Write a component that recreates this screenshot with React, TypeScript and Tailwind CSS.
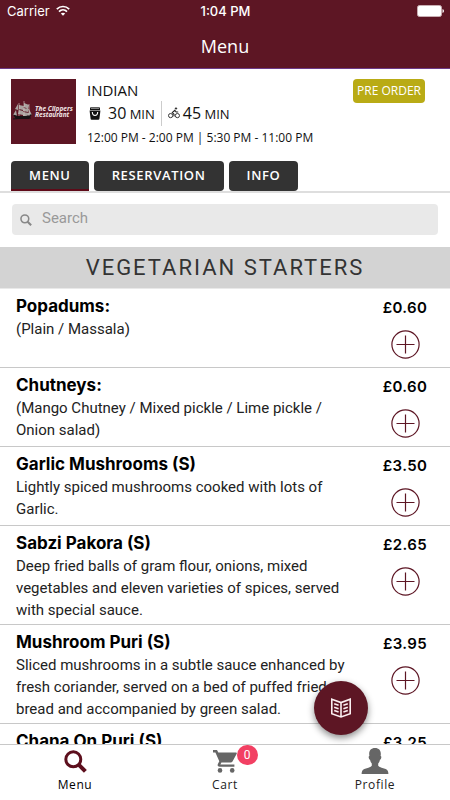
import { useState } from "react"

type MenuItem = {
  name: string
  description?: string
  price: number
}

const items: MenuItem[] = [
  { name: "Popadums:", description: "(Plain / Massala)", price: 0.6 },
  {
    name: "Chutneys:",
    description: "(Mango Chutney / Mixed pickle / Lime pickle / Onion salad)",
    price: 0.6,
  },
  {
    name: "Garlic Mushrooms (S)",
    description: "Lightly spiced mushrooms cooked with lots of Garlic.",
    price: 3.5,
  },
  {
    name: "Sabzi Pakora (S)",
    description:
      "Deep fried balls of gram flour, onions, mixed vegetables and eleven varieties of spices, served with special sauce.",
    price: 2.65,
  },
  {
    name: "Mushroom Puri (S)",
    description:
      "Sliced mushrooms in a subtle sauce enhanced by fresh coriander, served on a bed of puffed fried bread and accompanied by green salad.",
    price: 3.95,
  },
  { name: "Chana On Puri (S)", price: 3.25 },
]

const tabs = ["MENU", "RESERVATION", "INFO"]

const formatPrice = (price: number) => `£${price.toFixed(2)}`

const WifiIcon = () => (
  <svg width="14" height="12" viewBox="0 0 14 12" fill="none" stroke="white" strokeWidth="1.7" aria-hidden="true">
    <path d="M0.8 4.2C4.4 0.6 9.6 0.6 13.2 4.2" />
    <path d="M3 6.6C5.3 4.3 8.7 4.3 11 6.6" />
    <path d="M4.8 8.6C6.2 7.4 7.8 7.4 9.2 8.6L7 10.8Z" fill="white" stroke="none" />
  </svg>
)

const BatteryIcon = () => (
  <svg width="27" height="12" viewBox="0 0 27 12" aria-hidden="true">
    <rect x="0.5" y="0.5" width="24" height="11" rx="2" fill="white" stroke="#c9aeb3" />
    <path d="M25.5 4v4q1.5-.6 1.5-2t-1.5-2z" fill="white" />
  </svg>
)

const Logo = () => (
  <div className="flex size-[65px] shrink-0 items-center bg-[#5d1624]">
    <svg width="65" height="65" viewBox="0 0 65 65" role="img" aria-label="The Clippers Restaurant">
      <g fill="#aaa3a0">
        <path d="M7 25l-3 5 3 1zM8 26l5 1-1 4-4-1zM8 31l4 1v4l-5-1z" />
        <path d="M13 24l5 2-1 4-4-2zM12 29l6 1-1 3-5-1zM12 33l6 1v3h-6z" />
        <path d="M5 31l-3 5 4 1zM18 30l3 6h-3z" />
      </g>
      <path d="M2 35.5l5 1.5h8l6-2-3 5H5z" fill="#181315" />
      <path d="M8 24v13M13 22v15M18 25v12" stroke="#d8cdca" strokeWidth="0.6" />
      <path d="M2 40q9-1 18-1" stroke="#181315" fill="none" />
      <g fill="#f1e6e7" fontFamily="Noto Sans, sans-serif" fontSize="6.5" fontWeight="700" fontStyle="italic">
        <text x="24" y="32">The Clippers</text>
        <text x="24" y="38">Restaurant</text>
      </g>
    </svg>
  </div>
)

const BagIcon = () => (
  <svg width="12" height="13" viewBox="0 0 12 13" aria-hidden="true">
    <path d="M1 1.4Q1 .3 2 .3h8q1 0 1 1.1V3H1z" fill="#111" />
    <path d="M2 1.3h8" stroke="white" strokeWidth="0.6" />
    <path d="M.6 3.6h10.8L10.4 12q-.1.8-1 .8H2.6q-.9 0-1-.8z" fill="#111" />
    <path d="M3.3 5q.2 3.4 2.7 3.4T8.7 5" fill="none" stroke="white" strokeWidth="1.1" />
  </svg>
)

const BikeIcon = () => (
  <svg width="12" height="12" viewBox="0 0 12 12" fill="none" stroke="#222" strokeWidth="0.9" aria-hidden="true">
    <circle cx="2.6" cy="8.6" r="2.1" />
    <circle cx="9.4" cy="8.6" r="2.1" />
    <circle cx="8" cy="1.5" r="0.7" fill="#222" />
    <path d="M6 9.5V7.3L4.3 5.6 6.8 3.3 8.2 5h2" strokeWidth="1.1" />
  </svg>
)

const SearchIcon = ({ className }: { className: string }) => (
  <svg className={className} viewBox="0 0 24 24" fill="none" stroke="currentColor" aria-hidden="true">
    <circle cx="9.7" cy="9.7" r="7.8" strokeWidth="3.1" />
    <path d="M15.3 15.3l7 7" strokeWidth="4.2" />
  </svg>
)

const CartIcon = () => (
  <svg width="26" height="24" viewBox="0 0 26 24" fill="#666" aria-hidden="true">
    <path d="M1 1h4l1.3 2.6H24q1.2 0 .7 1.2l-4.2 7.6q-.6 1.1-1.9 1.1H9.4l-1 1.9h14v2.3H7.6q-2.8-.2-1.7-2.8l1.4-2.7L3.4 3.4H1z" />
    <circle cx="8" cy="21.4" r="2.3" />
    <circle cx="20.2" cy="21.4" r="2.3" />
  </svg>
)

const ProfileIcon = () => (
  <svg width="28" height="26" viewBox="0 0 28 26" fill="#666" aria-hidden="true">
    <path d="M14 0c4 0 6 2.4 5.8 6.4l-.2 1.5q1 .2.6 2-.3 1.6-1.2 1.9-.4 2.2-1.8 3.6v2.4q.5 1 3.4 1.9l4.1 1.3q2.7.9 2.7 5H.6q0-4.1 2.7-5l4.1-1.3q2.9-.9 3.4-1.9v-2.4Q9.400 14 9 11.800q-.9-.3-1.200-1.900-.4-1.800.6-2l-.2-1.500C8 2.400 10 0 14 0z" />
  </svg>
)

const BookIcon = () => (
  <svg width="22" height="22" viewBox="0 0 22 22" fill="none" stroke="#fbeff1" strokeWidth="1.6" aria-hidden="true">
    <path d="M1.8 2.2L11 5.6l9.2-3.4v14.6L11 20l-9.2-3.2zM11 5.6V20" />
    <path d="M4.2 6.8l4.400 1.500M4.200 10.300l4.400 1.500M4.200 13.600l4.400 1.500M17.800 6.800l-4.400 1.500M17.800 10.300l-4.400 1.500M17.800 13.600l-4.400 1.500" />
  </svg>
)

const MenuRow = ({ item, onAdd }: { item: MenuItem; onAdd: () => void }) => (
  <li className="flex min-h-[79px] shrink-0 justify-between border-b border-[#c8c8c8] pt-[5px] pr-[22px] pb-[3px] pl-4">
    <div className="max-w-[342px] flex-1">
      <h3 className="font-['Inter'] text-[17px] leading-6 font-bold text-black">{item.name}</h3>
      {item.description && (
        <p className="font-['Roboto'] text-[15px] leading-[22px] text-[#222]">{item.description}</p>
      )}
    </div>
    <div className="flex w-[46px] flex-col items-center gap-[11px] pt-[3px]">
      <span className="font-['Inter'] text-[15px] leading-[22px] font-semibold tracking-wide text-black">
        {formatPrice(item.price)}
      </span>
      <button type="button" aria-label={`Add ${item.name}`} onClick={onAdd}>
        <svg width="29" height="29" viewBox="0 0 29 29" fill="none" stroke="#5d1624" aria-hidden="true">
          <circle cx="14.5" cy="14.5" r="13.6" strokeWidth="1.2" />
          <path d="M5.5 14.5h18M14.5 5.5v18" strokeWidth="1.2" />
        </svg>
      </button>
    </div>
  </li>
)

const App = () => {
  const [activeTab, setActiveTab] = useState("MENU")
  const [count, setCount] = useState(0)
  const [query, setQuery] = useState("")

  const visible = items.filter((item) => item.name.toLowerCase().includes(query.toLowerCase()))

  return (
    <div className="flex h-screen flex-col bg-white font-['Open_Sans',sans-serif]">
      <header className="shrink-0 border-b border-[#6d3a86] bg-[#5d1624] text-white">
        <div className="grid grid-cols-3 items-center pt-px pr-1.5 pl-[7px] font-['Inter'] text-[13px] leading-5">
          <div className="flex items-center gap-1.5">
            <span>Carrier</span>
            <WifiIcon />
          </div>
          <span className="text-center font-medium">1:04 PM</span>
          <div className="flex justify-end">
            <BatteryIcon />
          </div>
        </div>
        <h1 className="pt-[11px] pb-2 text-center text-lg">Menu</h1>
      </header>

      <section className="shrink-0 border-b-2 border-[#dedede] px-[11px] pt-2.5">
        <div className="flex items-start">
          <Logo />
          <div className="flex-1 pl-[11px] text-[#111]">
            <p className="text-[15px] leading-[22px]">INDIAN</p>
            <div className="flex h-6 items-center">
              <span className="flex items-center gap-[7px] border-r border-[#ccc] pr-1.5 pl-0.5">
                <BagIcon />
                <span className="text-[13px] leading-6">
                  <span className="text-base leading-6">30</span> MIN
                </span>
              </span>
              <span className="flex items-center gap-[3px] pl-1.5">
                <BikeIcon />
                <span className="text-[13px] leading-6">
                  <span className="text-base leading-6">45</span> MIN
                </span>
              </span>
            </div>
            <p className="text-xs leading-[26px]">12:00 PM - 2:00 PM | 5:30 PM - 11:00 PM</p>
          </div>
          <button type="button" className="mr-3.5 rounded bg-[#b9ab15] px-1 text-xs leading-6 text-white">
            PRE ORDER
          </button>
        </div>
        <div className="mt-2.5 flex gap-[5px]">
          {tabs.map((tab) => (
            <button
              key={tab}
              type="button"
              onClick={() => setActiveTab(tab)}
              className={`h-[30px] rounded border-b-2 bg-[#333] px-[18px] text-[13px] leading-7 font-semibold tracking-wider text-white ${
                tab === activeTab ? "rounded-b-none border-[#5e0a18]" : "border-[#333]"
              }`}
            >
              {tab}
            </button>
          ))}
        </div>
      </section>

      <div className="shrink-0 px-3 pt-[11px] pb-3">
        <label className="flex h-[31px] items-center gap-2.5 rounded bg-[#e9e9e9] px-2 font-['Roboto']">
          <SearchIcon className="size-3 text-[#888]" />
          <input
            type="text"
            aria-label="Search"
            placeholder="Search"
            value={query}
            onChange={(e) => setQuery(e.target.value)}
            className="h-7 min-w-0 flex-1 bg-transparent pb-1 text-[15px] text-[#333] outline-none placeholder:text-[#999]"
          />
        </label>
      </div>

      <main className="relative flex min-h-0 flex-1 flex-col">
        <h2 className="shrink-0 border-b border-[#e9e9e9] bg-[#d3d3d3] text-center font-['Roboto'] text-[22px] leading-[41px] tracking-[2px] text-[#333]">
          VEGETARIAN STARTERS
        </h2>
        <ul className="flex min-h-0 flex-1 flex-col overflow-y-auto [scrollbar-width:none]">
          {visible.map((item) => (
            <MenuRow key={item.name} item={item} onAdd={() => setCount((c) => c + 1)} />
          ))}
        </ul>
        <button
          type="button"
          aria-label="Menu sections"
          className="absolute right-[82px] bottom-[9px] flex size-[54px] items-center justify-center rounded-full bg-[#5d1624] shadow-[0_3px_7px_rgba(0,0,0,0.45)]"
        >
          <BookIcon />
        </button>
      </main>

      <nav className="grid h-14 shrink-0 grid-cols-3 border-t border-[#c8c8c8] text-xs tracking-wider text-[#222]">
        <a href="#menu" className="flex flex-col items-center pt-0.5 text-black">
          <span className="flex h-7 items-center">
            <SearchIcon className="size-[23px] text-[#5d0f1d]" />
          </span>
          <span className="leading-5 font-medium">Menu</span>
        </a>
        <a href="#cart" className="flex flex-col items-center pt-0.5">
          <span className="relative flex h-7 items-center">
            <CartIcon />
            <span className="absolute -top-0.5 left-[25px] flex h-5 w-[21px] items-center justify-center rounded-full bg-[#f24063] font-['Roboto'] text-xs text-white">
              {count}
            </span>
          </span>
          <span className="leading-5">Cart</span>
        </a>
        <a href="#profile" className="flex flex-col items-center pt-0.5">
          <span className="flex h-7 items-center">
            <ProfileIcon />
          </span>
          <span className="leading-5">Profile</span>
        </a>
      </nav>
    </div>
  )
}

export default App
